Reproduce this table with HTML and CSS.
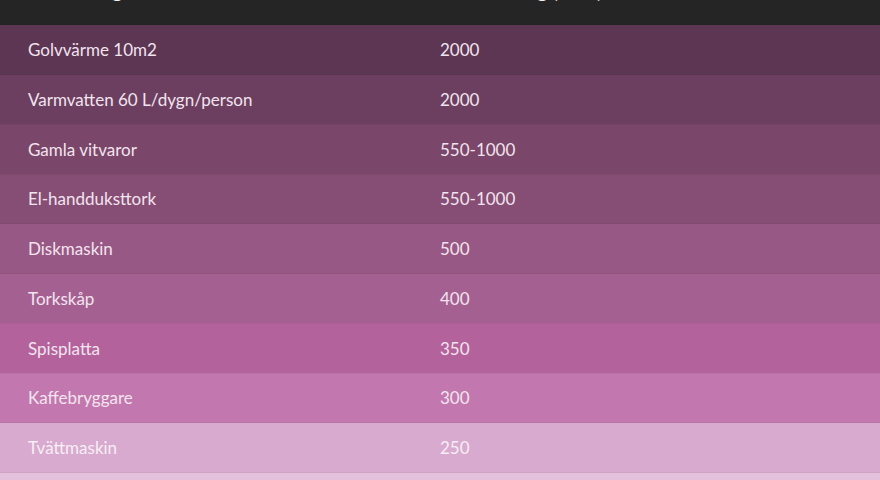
FILE: index.html
```
<!DOCTYPE html>
<html lang="sv">
<head>
<meta charset="utf-8">
<link rel="stylesheet" href="styles.css">
</head>
<body>
<div class="wrap">
<table class="power">
<colgroup><col class="c1"><col class="c2"></colgroup>
<thead>
<tr class="head"><th>Utrustning</th><th>Förbrukning (watt)</th></tr>
</thead>
<tbody>
<tr class="r1"><td>Golvvärme 10m2</td><td>2000</td></tr>
<tr class="r2"><td>Varmvatten 60 L/dygn/person</td><td>2000</td></tr>
<tr class="r3"><td>Gamla vitvaror</td><td>550-1000</td></tr>
<tr class="r4"><td>El-handduksttork</td><td>550-1000</td></tr>
<tr class="r5"><td>Diskmaskin</td><td>500</td></tr>
<tr class="r6"><td>Torkskåp</td><td>400</td></tr>
<tr class="r7"><td>Spisplatta</td><td>350</td></tr>
<tr class="r8"><td>Kaffebryggare</td><td>300</td></tr>
<tr class="r9"><td>Tvättmaskin</td><td>250</td></tr>
<tr class="r10"><td></td><td></td></tr>
</tbody>
</table>
</div>
</body>
</html>
```
FILE: styles.css
```
html, body {
  margin: 0;
  padding: 0;
  background: #252525;
  overflow: hidden;
}
.wrap {
  margin-top: -25px;
}
.power {
  width: 880px;
  border-collapse: collapse;
  table-layout: fixed;
  font-family: Lato, "Open Sans", sans-serif;
  font-size: 17px;
  color: #f2e4ee;
}
.c1 { width: 412px; }
.c2 { width: 468px; }
.power th, .power td {
  text-align: left;
  padding: 0 0 0 28px;
  height: 49.75px;
  box-sizing: border-box;
  vertical-align: middle;
}
.power th {
  font-weight: 600;
  font-size: 20px;
  color: #f0f0f0;
  background: #252525;
  padding-bottom: 20px;
}
.power tbody tr td {
  border-top: 1px solid rgba(0,0,0,0.04);
}
.r1 { background: #5d3654; }
.r2 { background: #6c3f60; }
.r3 { background: #7a4669; }
.r4 { background: #864e75; }
.r5 { background: #985885; }
.r6 { background: #a56092; }
.r7 { background: #b4629c; }
.r8 { background: #c278ae; }
.r9 { background: #d9aacf; }
.r10 { background: #e3c1dd; }
.r9 td, .r10 td { color: #f6eef4; }
```
